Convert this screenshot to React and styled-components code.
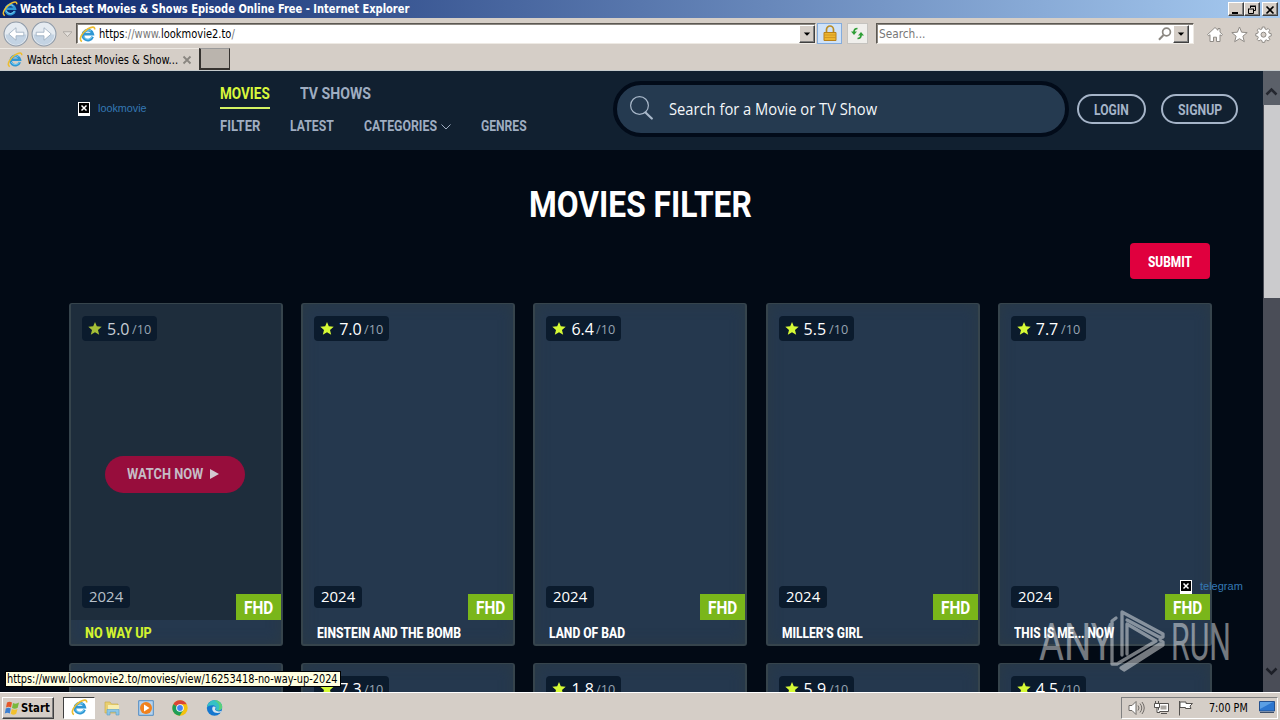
import React, { useLayoutEffect, useRef } from "react"
import styled, { createGlobalStyle, css } from "styled-components"

const GlobalStyle = createGlobalStyle`
  * { box-sizing: border-box; }
  body {
    margin: 0;
    background: #d5cec7;
    overflow: hidden;
  }
  svg { display: block; flex: none; }
`

const ui = `"DejaVu Sans Condensed", "DejaVu Sans", sans-serif`
const display = `Roboto, "Open Sans", sans-serif`
const rounded = `"Open Sans", "Noto Sans", sans-serif`

const FitBox = styled.span`
  display: block;
  flex: none;
  width: ${p => p.$w}px;
  white-space: nowrap;
  > span {
    display: inline-block;
    transform-origin: 0 50%;
  }
`

// Squeezes or stretches a label so that it fills the given width
const Fit = ({ w, children, className }) => {
  const ref = useRef(null)
  useLayoutEffect(() => {
    const el = ref.current
    const fit = () => {
      el.style.transform = `scaleX(${w / el.offsetWidth})`
    }
    fit()
    document.fonts.ready.then(fit)
  }, [w])
  return (
    <FitBox $w={w} className={className}>
      <span ref={ref}>{children}</span>
    </FitBox>
  )
}

const Screen = styled.div`
  width: 1280px;
  height: 720px;
  display: flex;
  flex-direction: column;
  overflow: hidden;
  background: #d5cec7;
  font-family: ${ui};
  font-size: 11px;
  color: #000;
`

const TitleBar = styled.div`
  height: 18px;
  flex: none;
  display: flex;
  align-items: center;
  padding: 0 2px 0 2px;
  gap: 2px;
  background: linear-gradient(90deg, #0a246a, #a6caf0);
  color: #fff;
  font-weight: bold;
  font-size: 11.5px;
  line-height: 16px;
`

const raised = css`
  background: #d5cec7;
  border: 1px solid;
  border-color: #fff #404040 #404040 #fff;
  box-shadow: inset -1px -1px 0 #808080;
`

const WindowButtons = styled.div`
  display: flex;
  margin-left: auto;
  button:last-child { margin-left: 2px; }
`

const WindowButton = styled.button`
  ${raised}
  width: 16px;
  height: 14px;
  padding: 1px 0 0 2px;
`

const Toolbar = styled.div`
  height: 30px;
  flex: none;
  display: flex;
  align-items: center;
  padding: 1px 8px 0 3px;
`

const NavButtons = styled.div`
  display: flex;
  align-items: center;
  width: 73px;
  gap: 2px;
`

const Field = styled.div`
  height: 21px;
  width: ${p => p.$w}px;
  margin-left: ${p => p.$ml || 0}px;
  display: flex;
  align-items: center;
  background: #fff;
  border: 1px solid;
  border-color: #5c5852 #eeeae4 #eeeae4 #5c5852;
  box-shadow: inset 1px 1px 0 #8b8781;
  padding: 1px ${p => p.$pr || 0}px 0 2px;
  gap: ${p => p.$gap || 3}px;
  font-size: 11.5px;
  color: ${p => p.$c || "#000"};
`

const Faint = styled.span`
  color: #777;
`

const Dropdown = styled.button`
  ${raised}
  width: 16px;
  height: 18px;
  padding: 0 0 0 3px;
  margin-top: -1px;
`

const Spacer = styled.div`
  flex: 1;
`

const ToolButton = styled.div`
  width: ${p => p.$w}px;
  height: 21px;
  margin-left: ${p => (p.$on ? 1 : 5)}px;
  border: 1px solid ${p => (p.$on ? "#84acdd" : "#c5c3bf")};
  background: ${p => (p.$on ? "#cfe2f8" : "#f0efec")};
  display: flex;
  align-items: center;
  justify-content: center;
`

const Tools = styled.div`
  display: flex;
  gap: 7px;
  margin: 2px 0 0 auto;
`

const Tabs = styled.div`
  height: 23px;
  flex: none;
  display: flex;
  border-bottom: 1px solid #c5cacc;
`

const Tab = styled.div`
  width: 199px;
  display: flex;
  align-items: center;
  padding: 1px 0 0 7px;
  gap: 4px;
  border-top: 1px solid #ece8e2;
  font-size: 11.5px;
`

const NewTab = styled.div`
  width: 31px;
  height: 22px;
  background: #bab4ad;
  border: solid #35322f;
  border-width: 0 1px 2px 2px;
  border-top: 1px solid #999;
`

const Viewport = styled.div`
  height: 621px;
  flex: none;
  display: flex;
  overflow: hidden;
  position: relative;
`

const Page = styled.main`
  width: 1263px;
  height: 100%;
  overflow: hidden;
  background: #020a15;
  font-family: ${display};
`

const Header = styled.header`
  height: 79px;
  background: #112030;
  display: flex;
  padding-left: 78px;
`

const Missing = styled.div`
  display: flex;
  align-items: center;
  gap: 8px;
  color: #3478b4;
  font: 11px "Liberation Sans", Arial, sans-serif;
  svg { margin-top: 3px; }
`

const Logo = styled(Missing)`
  width: 142px;
  height: 17px;
  margin-top: 28px;
`

const Nav = styled.nav`
  width: 393px;
  padding-top: 12px;
  color: #9fadc1;
  font-weight: 700;
`

const NavRow = styled.div`
  display: flex;
  height: ${p => p.$h}px;
  gap: 30px;
  font-size: ${p => p.$size}px;
  line-height: 21px;
`

const NavItem = styled.a`
  display: flex;
  align-items: center;
  gap: 4px;
  height: ${p => (p.$active ? 26 : 21)}px;
  ${p =>
    p.$active &&
    css`
      color: #d9f83c;
      border-bottom: 2px solid #d5f462;
      padding-bottom: 3px;
    `}
`

const SearchBox = styled.div`
  width: 456px;
  height: 56px;
  margin-top: 10px;
  border: 4px solid #020b19;
  border-radius: 28px;
  background: #253a50;
  display: flex;
  align-items: center;
  padding: 0 13px;
  gap: 16px;
  color: #f4f7fa;
  font: 15.5px ${rounded};
`

const SearchIcon = styled.svg`
  margin-bottom: 3px;
`

const Account = styled.div`
  display: flex;
  gap: 15px;
  margin: 23px 0 0 8px;
`

const Pill = styled.button`
  width: ${p => p.$w}px;
  height: 30px;
  padding: 2px 0 0;
  display: flex;
  align-items: center;
  justify-content: center;
  border: 2px solid #a5b4c8;
  border-radius: 15px;
  background: none;
  color: #a5b4c8;
  font: 700 14.5px ${display};
`

const Content = styled.section`
  padding: 34px 51px 0 69px;
`

const Heading = styled.h1`
  margin: 0;
  display: flex;
  justify-content: center;
  height: 42px;
  font-size: 37px;
  line-height: 42px;
  font-weight: 700;
  color: #fff;
`

const FilterForm = styled.div`
  display: flex;
  justify-content: flex-end;
  padding: 17px 2px 24px;
`

const Submit = styled.button`
  width: 80px;
  height: 36px;
  padding: 2px 0 0;
  border: 0;
  border-radius: 4px;
  background: #e0003e;
  color: #fff;
  display: flex;
  align-items: center;
  justify-content: center;
  font: 800 14px ${display};
`

const Grid = styled.div`
  display: grid;
  grid-template-columns: repeat(5, 214px);
  gap: 17px 18.2px;
`

const Card = styled.article`
  height: 343px;
  border: 2px solid #36444c;
  border-top-width: 1px;
  border-radius: 3px;
  background: #25384e;
  box-shadow: inset 0 0 14px #2b3a45;
  display: flex;
  flex-direction: column;
  overflow: hidden;
`

const Poster = styled.div`
  height: 316px;
  flex: none;
  display: flex;
  flex-direction: column;
  justify-content: space-between;
  padding: 12px 0 0 11px;
  background: ${p => (p.$hover ? "#1e2d3c" : "transparent")};
`

const Rating = styled.div`
  width: 75px;
  height: 25px;
  border-radius: 4px;
  background: #0b1b2d;
  display: flex;
  align-items: center;
  padding-left: 6px;
  font-family: ${rounded};
  font-size: 16px;
  line-height: 24px;
  color: ${p => (p.$dim ? "#c8ced5" : "#fff")};
  svg { margin-right: 5px; }
`

const OutOf = styled(Fit)`
  margin-left: 2px;
  padding-top: 2px;
  font-size: 12px;
  color: #97a4b2;
`

const Watch = styled.button`
  width: 140px;
  height: 37px;
  margin: 21px 0 0 23px;
  padding: 0 0 0 22px;
  border: 0;
  border-radius: 19px;
  background: #970d3c;
  color: #c6bcc6;
  display: flex;
  align-items: center;
  gap: 7px;
  font: 700 14px ${display};
`

const PosterFoot = styled.div`
  display: flex;
  justify-content: space-between;
`

const Year = styled.div`
  width: 48px;
  height: 22px;
  padding-bottom: 1px;
  border-radius: 4px;
  background: #0b1b2d;
  display: flex;
  align-items: center;
  justify-content: center;
  font: 14.5px ${rounded};
  color: ${p => (p.$dim ? "#b8c0c9" : "#fff")};
`

const Quality = styled.div`
  width: 45px;
  height: 26px;
  margin-top: 8px;
  padding-top: 2px;
  background: #7ab61a;
  color: #fff;
  display: flex;
  align-items: center;
  justify-content: center;
  font-size: 17.5px;
  font-weight: 700;
`

const CardTitle = styled.h3`
  margin: 0;
  padding: 3px 0 0 14px;
  height: 25px;
  display: flex;
  align-items: center;
  font-size: 14.5px;
  font-weight: 800;
  color: ${p => (p.$hover ? "#d2f22f" : "#fff")};
`

const Scrollbar = styled.div`
  width: 17px;
  height: 100%;
  background: #4a4d57;
  display: flex;
  flex-direction: column;
  justify-content: space-between;
`

const Arrow = styled.div`
  height: 34px;
  background: ${p => (p.$top ? "#5b6069" : "none")};
  padding: ${p => (p.$top ? "16px" : "9px")} 0 0 2px;
`

const Thumb = styled.div`
  height: 193px;
  margin: 0 0 auto 1px;
  background: #cbcbcd;
`

const Telegram = styled(Missing)`
  position: absolute;
  left: 1180px;
  top: 506px;
`

const Watermark = styled.div`
  position: absolute;
  left: 1039px;
  top: 538px;
  height: 64px;
  display: flex;
  align-items: center;
  color: #fff;
  opacity: 0.45;
  font: 400 51px/64px ${display};
`

const WatermarkArrow = styled.svg`
  margin: 0 5px 0 -4px;
`

const WatermarkWord = styled(Fit)`
  padding-top: 4px;
`

const StatusTip = styled.div`
  position: absolute;
  left: 5px;
  top: 600px;
  width: 336px;
  height: 16px;
  padding-left: 1px;
  border: 1px solid #000;
  background: #ffffe1;
  font-size: 11.5px;
  line-height: 14px;
`

const Taskbar = styled.footer`
  height: 28px;
  flex: none;
  border-top: 1px solid #fff;
  display: flex;
  align-items: center;
  padding: 2px 2px 0;
`

const Start = styled.button`
  ${raised}
  width: 52px;
  height: 22px;
  padding: 0 0 0 1px;
  display: flex;
  align-items: center;
  gap: 1px;
  font: bold 12px ${ui};
`

const Launchers = styled.div`
  display: flex;
  margin-left: 9px;
`

const Launcher = styled.div`
  width: ${p => (p.$active ? 32 : 34)}px;
  height: 22px;
  display: flex;
  align-items: center;
  justify-content: center;
  ${p =>
    p.$active &&
    css`
      background: #fff;
      border: 1px solid;
      border-color: #404040 #fff #fff #404040;
    `}
`

const Tray = styled.div`
  margin-left: auto;
  width: 157px;
  height: 22px;
  border: 1px solid;
  border-color: #808080 #fff #fff #808080;
  display: flex;
  align-items: center;
  padding-left: 6px;
  gap: 8px;
  font-size: 11.5px;
`

const Clock = styled(Fit)`
  margin: 0 3px 0 7px;
`

const IeLogo = ({ size = 17 }) => (
  <svg width={size} height={size} viewBox="0 0 17 17" fill="none">
    <path d="M13.600 10.800a5 5 0 1 1 .2-2.600H4.500" stroke="#2f97d4" strokeWidth="2.700" />
    <path d="M13.400 10.400a5 5 0 0 1-9 .2M5 6a5 5 0 0 1 7-1" stroke="#7ad0f5" strokeWidth="1" />
    <path d="M3 15.500C-1 14 3 6.500 9 2.800c4-2.400 7-2.400 6.700.7" stroke="#edbd2f" strokeWidth="1.600" />
  </svg>
)

const RoundArrow = ({ flip }) => (
  <svg width="26" height="26" viewBox="0 0 25 25" fill="none">
    <circle cx="12.500" cy="12.500" r="11.500" fill="#e5ebf1" stroke="#8e9aa8" />
    <path d="M2.500 13a10 10 0 0 0 20 0z" fill="#c3d3e3" />
    <path
      d={flip ? "M5 10.800h7.500V6.500l7 6-7 6v-4.300H5z" : "M20 10.800h-7.500V6.500l-7 6 7 6v-4.300H20z"}
      fill="#fff"
      stroke="#9badbf"
      strokeWidth=".8"
    />
  </svg>
)

const DownTriangle = ({ hollow }) => (
  <svg width={hollow ? 9 : 8} height={hollow ? 6 : 4} viewBox="0 0 8 5">
    <path d="M0 .5h8L4 4.800z" fill={hollow ? "#e4e0db" : "#000"} stroke={hollow ? "#aaa6a0" : "none"} strokeWidth=".8" />
  </svg>
)

const BrokenImage = () => (
  <svg width="12" height="14" viewBox="0 0 12 14">
    <path d="M0 0h12v14H0z" fill="#fff" />
    <path d="M1 1h10v10H1z" fill="#000" />
    <path d="M3.500 3.500l5 5m0-5l-5 5" stroke="#fff" strokeWidth="1.500" />
  </svg>
)

const Star = ({ dim }) => (
  <svg width="14" height="13" viewBox="0 0 14 13">
    <path
      d="M7 0l1.800 4.300 4.900.4L10 7.900l1.200 4.800L7 10.200l-4.200 2.500L4 7.900.3 4.700l4.900-.4z"
      fill={dim ? "#a5bf36" : "#d6fa35"}
    />
  </svg>
)

const Lock = () => (
  <svg width="14" height="17" viewBox="0 0 14 17">
    <path d="M3.500 8V4.500a3.500 3.500 0 0 1 7 0V8" fill="none" stroke="#b98c25" strokeWidth="1.700" />
    <path d="M1 7.500h12v8H1z" fill="#edb52d" stroke="#b7801a" />
    <path d="M1.500 10h11M1.500 12.500h11" stroke="#c98d1e" strokeWidth=".7" />
  </svg>
)

const Refresh = () => (
  <svg width="15" height="13" viewBox="0 0 15 13" fill="none" stroke="#2f9e36" strokeWidth="1.700">
    <path d="M7.500 1.500Q4 1.500 4 5M7.500 11.500Q11 11.500 11 8" />
    <path d="M1 4.500h6L4 8zM8 8.500h6L11 5z" fill="#2f9e36" stroke="none" />
  </svg>
)

const FieldSearch = () => (
  <svg width="14" height="14" viewBox="0 0 14 14" fill="none">
    <circle cx="8.500" cy="5" r="3.900" stroke="#8b8781" strokeWidth="1.700" />
    <path d="M5.500 8L1 12.800" stroke="#8b8781" strokeWidth="2" />
  </svg>
)

const HomeIcon = () => (
  <svg width="18" height="17" viewBox="0 0 18 17" fill="#fff" stroke="#8f8b86" strokeLinejoin="round">
    <path d="M9 1.500L1.500 8.600l1.300 1.200L4 8.700V15.500h3.500v-4.300h3v4.300H14V8.700l1.200 1.100 1.300-1.200L14 6.200V2.500h-2v1.800z" />
  </svg>
)

const FavIcon = () => (
  <svg width="17" height="17" viewBox="0 0 17 17" fill="#fff" stroke="#8f8b86" strokeLinejoin="round">
    <path d="M8.500 1l2.100 5.200 5.600.4-4.300 3.600 1.400 5.500-4.800-3-4.800 3 1.400-5.500L.8 6.600l5.600-.4z" />
  </svg>
)

const GearIcon = () => (
  <svg width="17" height="17" viewBox="0 0 17 17" fill="#fff" stroke="#8f8b86" strokeLinejoin="round">
    <path d="M7.300 1h2.400l.4 2 1.300.6 1.800-1.100 1.600 1.700-1.100 1.700.5 1.300 2 .4V10l-2 .4-.5 1.200 1.100 1.800-1.600 1.600-1.800-1.100-1.300.6-.4 1.900H7.300l-.4-1.900-1.300-.6L3.800 15l-1.600-1.600 1.100-1.800-.5-1.200-2-.4V7.600l2-.4.5-1.300-1.100-1.700 1.600-1.700 1.800 1.100L6.900 3z" />
    <circle cx="8.500" cy="8.700" r="2.500" fill="#d5cec7" />
  </svg>
)

const WindowsFlag = () => (
  <svg width="16" height="16" viewBox="0 0 16 16">
    <path d="M3 2.500q2.500-1.500 5 0L7 7.500q-2.500-1.500-5 0z" fill="#e5582a" />
    <path d="M9 3q3 1.500 6-.5l-1.300 5.200Q11 9.500 8 8z" fill="#79b83c" />
    <path d="M1.800 8.500q2.500-1.500 5 0l-1 5q-2.500-1.500-5 0z" fill="#3b7fd1" />
    <path d="M7.800 9q3 1.500 5.700 0l-1.300 4.800q-2.700 1.700-5.400 0z" fill="#f2c12e" />
  </svg>
)

const FolderIcon = () => (
  <svg width="17" height="16" viewBox="0 0 17 16">
    <path d="M1 2h5l1.500 2H14v9H1z" fill="#e9cf71" stroke="#c8a845" strokeWidth=".6" />
    <path d="M4 5h11v6H4z" fill="#f8eeb0" />
    <path d="M3 15V9.500h12V15h-3v-3H6v3z" fill="#8cc7e6" stroke="#5a9fc8" strokeWidth=".6" />
  </svg>
)

const PlayerIcon = () => (
  <svg width="16" height="16" viewBox="0 0 16 16">
    <path d="M.7.700h14.600v14.600H.7z" fill="#b5d3ee" stroke="#4f8cc4" />
    <circle cx="8" cy="8" r="6" fill="#f0821e" />
    <path d="M6 4.500v7L11.500 8z" fill="#fff" />
  </svg>
)

const ChromeIcon = () => (
  <svg width="16" height="16" viewBox="0 0 16 16">
    <circle cx="8" cy="8" r="7.700" fill="#f4c20d" />
    <path d="M8 8L1.300 4.200A7.700 7.700 0 0 1 14.700 4.200H8z" fill="#db4437" />
    <path d="M8 8L1.300 4.200A7.700 7.700 0 0 0 7.700 15.700L11.300 9.900z" fill="#1e9e58" />
    <circle cx="8" cy="8" r="3.800" fill="#fff" />
    <circle cx="8" cy="8" r="2.900" fill="#4285f4" />
  </svg>
)

const EdgeIcon = () => (
  <svg width="17" height="16" viewBox="0 0 17 16">
    <circle cx="8.500" cy="8" r="7.700" fill="#1577cf" />
    <path d="M1 7.500C1.500 3 5 .3 8.700.3c4.500 0 7.500 3.200 7.500 6.500 0 2.500-2 3.700-4 3.700-1.500 0-2.500-.6-2.300-1.100.8-1.500.3-3.600-2.400-4.100C5 4.900 2 5.600 1 7.500z" fill="#35c1c5" />
    <path d="M8 .3c4.800-.3 8.200 3 8.200 6.500 0 2.500-2 3.700-4 3.700C15 6 12 2 8 .3z" fill="#5ad07b" />
    <path d="M7 6.500c-2.500 3.500 1 8 7.800 6l1-1.700c-2 1-5.500.8-6.500-.8-.6-1 .8-2 .1-3.200z" fill="#d5e5ef" />
  </svg>
)

const cards = [
  { score: "5.0", title: "NO WAY UP", w: 67, hover: true },
  { score: "7.0", title: "EINSTEIN AND THE BOMB", w: 144 },
  { score: "6.4", title: "LAND OF BAD", w: 76 },
  { score: "5.5", title: "MILLER’S GIRL", w: 81 },
  { score: "7.7", title: "THIS IS ME... NOW", w: 100 },
  {},
  { score: "7.3" },
  { score: "1.8" },
  { score: "5.9" },
  { score: "4.5" },
]

const MovieCard = ({ score, title, w, hover }) => (
  <Card>
    <Poster $hover={hover}>
      {score && (
        <Rating $dim={hover}>
          <Star dim={hover} />
          <Fit w={23}>{score}</Fit>
          <OutOf w={19}>/10</OutOf>
        </Rating>
      )}
      {hover && (
        <Watch>
          <Fit w={76}>WATCH NOW</Fit>
          <svg width="9" height="10" viewBox="0 0 9 10">
            <path d="M0 0v10l9-5z" fill="#d3c8d0" />
          </svg>
        </Watch>
      )}
      {title && (
        <PosterFoot>
          <Year $dim={hover}>
            <Fit w={34}>2024</Fit>
          </Year>
          <Quality>
            <Fit w={29}>FHD</Fit>
          </Quality>
        </PosterFoot>
      )}
    </Poster>
    {title && (
      <CardTitle $hover={hover}>
        <Fit w={w}>{title}</Fit>
      </CardTitle>
    )}
  </Card>
)

const BrowserChrome = () => (
  <>
    <TitleBar>
      <IeLogo size={16} />
      <Fit w={389}>Watch Latest Movies &amp; Shows Episode Online Free - Internet Explorer</Fit>
      <WindowButtons>
        <WindowButton>
          <svg width="10" height="10"><path d="M1 7h6v2H1z" /></svg>
        </WindowButton>
        <WindowButton>
          <svg width="10" height="10" fill="none" stroke="#000">
            <path d="M3 1h6M3.500 1v2M3 1.500h5.500v4H7M1 4h6M1.500 4v4.500h5V4" />
          </svg>
        </WindowButton>
        <WindowButton>
          <svg width="10" height="10"><path d="M1.500 1.500l7 7m0-7l-7 7" stroke="#000" strokeWidth="1.700" /></svg>
        </WindowButton>
      </WindowButtons>
    </TitleBar>
    <Toolbar>
      <NavButtons>
        <RoundArrow />
        <RoundArrow flip />
        <Spacer />
        <DownTriangle hollow />
        <Spacer />
      </NavButtons>
      <Field $w={740}>
        <IeLogo />
        <Fit w={136}>
          https<Faint>://www.</Faint>lookmovie2.to<Faint>/</Faint>
        </Fit>
        <Spacer />
        <Dropdown><DownTriangle /></Dropdown>
      </Field>
      <ToolButton $w={25} $on><Lock /></ToolButton>
      <ToolButton $w={21}><Refresh /></ToolButton>
      <Field $w={318} $ml={8} $pr={4} $gap={1} $c="#777">
        <Fit w={46}>Search...</Fit>
        <Spacer />
        <FieldSearch />
        <Dropdown><DownTriangle /></Dropdown>
      </Field>
      <Tools>
        <HomeIcon />
        <FavIcon />
        <GearIcon />
      </Tools>
    </Toolbar>
    <Tabs>
      <Tab>
        <IeLogo size={16} />
        <Fit w={151}>Watch Latest Movies &amp; Show...</Fit>
        <svg width="10" height="10" viewBox="0 0 10 10">
          <path d="M1.500 1.500l7 7m0-7l-7 7" stroke="#8a8680" strokeWidth="1.800" />
        </svg>
      </Tab>
      <NewTab />
    </Tabs>
  </>
)

const SiteHeader = () => (
  <Header>
    <Logo>
      <BrokenImage />
      <Fit w={49}>lookmovie</Fit>
    </Logo>
    <Nav>
      <NavRow $h={33} $size={16.5}>
        <NavItem $active><Fit w={50}>MOVIES</Fit></NavItem>
        <NavItem><Fit w={71}>TV SHOWS</Fit></NavItem>
      </NavRow>
      <NavRow $h={21} $size={15}>
        <NavItem><Fit w={40}>FILTER</Fit></NavItem>
        <NavItem><Fit w={44}>LATEST</Fit></NavItem>
        <NavItem>
          <Fit w={73}>CATEGORIES</Fit>
          <svg width="10" height="6" viewBox="0 0 10 6">
            <path d="M.5.500L5 5 9.500.5" fill="none" stroke="#9fadc1" />
          </svg>
        </NavItem>
        <NavItem><Fit w={46}>GENRES</Fit></NavItem>
      </NavRow>
    </Nav>
    <SearchBox>
      <SearchIcon width="23" height="24" viewBox="0 0 23 24" fill="none" stroke="#a9b8ca">
        <circle cx="9.500" cy="9.500" r="8.900" strokeWidth="1.200" />
        <path d="M15.500 16.500l6.300 6" strokeWidth="2.200" strokeLinecap="round" />
      </SearchIcon>
      <Fit w={208}>Search for a Movie or TV Show</Fit>
    </SearchBox>
    <Account>
      <Pill $w={69}><Fit w={35}>LOGIN</Fit></Pill>
      <Pill $w={77}><Fit w={44}>SIGNUP</Fit></Pill>
    </Account>
  </Header>
)

const App = () => (
  <Screen>
    <GlobalStyle />
    <BrowserChrome />
    <Viewport>
      <Page>
        <SiteHeader />
        <Content>
          <Heading><Fit w={223}>MOVIES FILTER</Fit></Heading>
          <FilterForm>
            <Submit><Fit w={44}>SUBMIT</Fit></Submit>
          </FilterForm>
          <Grid>
            {cards.map((card, i) => (
              <MovieCard key={i} {...card} />
            ))}
          </Grid>
        </Content>
      </Page>
      <Scrollbar>
        <Arrow $top>
          <svg width="13" height="9" viewBox="0 0 13 9">
            <path d="M1.500 7.500l5-5 5 5" fill="none" stroke="#24272f" strokeWidth="2.500" />
          </svg>
        </Arrow>
        <Thumb />
        <Arrow>
          <svg width="13" height="9" viewBox="0 0 13 9">
            <path d="M1.500 1.500l5 5 5-5" fill="none" stroke="#1c1f27" strokeWidth="2.500" />
          </svg>
        </Arrow>
      </Scrollbar>
      <Telegram>
        <BrokenImage />
        <Fit w={43}>telegram</Fit>
      </Telegram>
      <Watermark>
        <WatermarkWord w={75}>ANY</WatermarkWord>
        <WatermarkArrow width="56" height="64" viewBox="0 0 56 64" fill="none" stroke="#fff" strokeWidth="3.300" strokeLinejoin="round" strokeLinecap="round">
          <path d="M12 46V3l41 22v3l-3 .5L17 11" />
          <path d="M6 9l-4 3v43h5l39-23-29-17v30" />
          <path d="M50 31l3 2v3L14 61l-3-2 39-24" />
        </WatermarkArrow>
        <WatermarkWord w={60}>RUN</WatermarkWord>
      </Watermark>
      <StatusTip>
        <Fit w={331}>https://www.lookmovie2.to/movies/view/16253418-no-way-up-2024</Fit>
      </StatusTip>
    </Viewport>
    <Taskbar>
      <Start>
        <WindowsFlag />
        <Fit w={29}>Start</Fit>
      </Start>
      <Launchers>
        <Launcher $active><IeLogo /></Launcher>
        <Launcher><FolderIcon /></Launcher>
        <Launcher><PlayerIcon /></Launcher>
        <Launcher><ChromeIcon /></Launcher>
        <Launcher><EdgeIcon /></Launcher>
      </Launchers>
      <Tray>
        <svg width="17" height="16" viewBox="0 0 17 16" fill="#fff" stroke="#6f6b67">
          <path d="M1 5.500h3l4-4v13l-4-4H1z" />
          <path d="M10 5.500q2 2.500 0 5M12 3.500q3.500 4.500 0 9M14 2q4.500 6 0 12" fill="none" />
        </svg>
        <svg width="17" height="16" viewBox="0 0 17 16" fill="#fff" stroke="#55524f">
          <path d="M5.500 3.500h10v8h-10zM8 13.500h6" />
          <path d="M7.500 5.500h6v4h-6z" fill="#aaa6a1" stroke="none" />
          <path d="M1.500 3.500h5v4h-5zM2.500 1v2.500M5.500 1v2.500M4 7.500v5h3" />
        </svg>
        <svg width="16" height="16" viewBox="0 0 16 16" fill="#fff" stroke="#55524f">
          <path d="M1.500 1v14.500M2 2h6v1.500h6.500L12 6l1 2.500H7.500V7.500H2z" />
        </svg>
        <Clock w={39}>7:00 PM</Clock>
        <svg width="16" height="13" viewBox="0 0 16 13">
          <path d="M.5.500h15v9.500H.5z" fill="#2c76cf" stroke="#24518f" />
          <path d="M1 1h13L1 8z" fill="#5b9fe4" />
          <path d="M1 11.500h14" stroke="#3b4d68" />
        </svg>
      </Tray>
    </Taskbar>
  </Screen>
)

export default App
